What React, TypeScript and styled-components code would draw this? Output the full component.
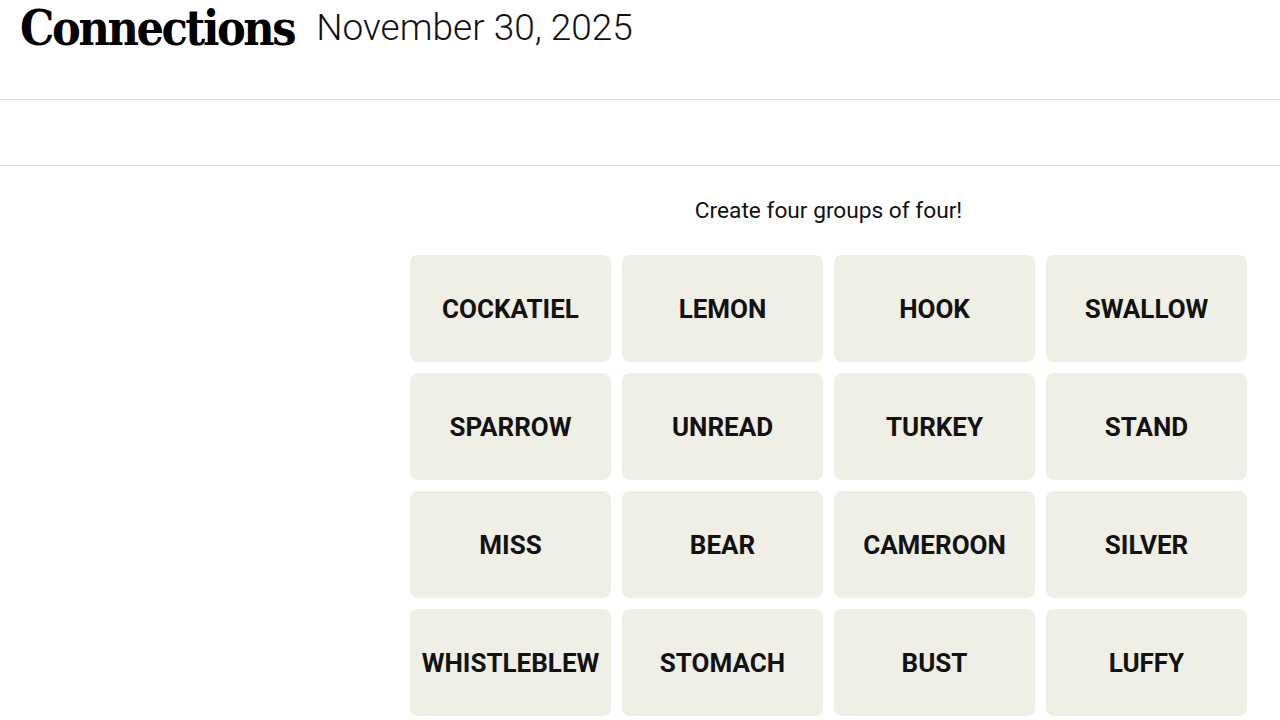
import React from 'react'
import styled, {createGlobalStyle} from 'styled-components'

const words = [
  'COCKATIEL', 'LEMON', 'HOOK', 'SWALLOW',
  'SPARROW', 'UNREAD', 'TURKEY', 'STAND',
  'MISS', 'BEAR', 'CAMEROON', 'SILVER',
  'WHISTLEBLEW', 'STOMACH', 'BUST', 'LUFFY',
]

const GlobalStyle = createGlobalStyle`
  html, body {
    margin: 0;
    padding: 0;
    background: #fff;
    overflow: hidden;
  }
  body {
    font-family: Roboto, 'Liberation Sans', sans-serif;
    color: #121212;
  }
`

function App() {
  return (
    <Page>
      <GlobalStyle />
      <Header>
        <Title>Connections</Title>
        <DateText>November 30, 2025</DateText>
      </Header>
      <Toolbar />
      <Game>
        <Prompt>Create four groups of four!</Prompt>
        <Grid>
          {words.map((w) => (
            <Tile key={w}>{w}</Tile>
          ))}
        </Grid>
      </Game>
    </Page>
  )
}

export default App

const Page = styled.div`
  width: 1280px;
  height: 720px;
`

const Header = styled.header`
  height: 100px;
  display: flex;
  align-items: flex-start;
  gap: 22px;
  padding: 0 0 0 20px;
  box-sizing: border-box;
  border-bottom: 1px solid #dcdcdc;
`

const Title = styled.h1`
  margin: 0;
  font-family: 'DejaVu Serif Condensed', 'DejaVu Serif', serif;
  font-stretch: condensed;
  font-weight: 700;
  font-size: 48px;
  letter-spacing: -2.4px;
  line-height: 56px;
  color: #000;
`

const DateText = styled.span`
  margin-top: 6px;
  font-family: Roboto, 'Liberation Sans', sans-serif;
  font-weight: 300;
  font-size: 37px;
  line-height: 44px;
  color: #121212;
`

const Toolbar = styled.div`
  height: 65px;
  border-bottom: 1px solid #dcdcdc;
`

const Game = styled.main`
  width: 837px;
  margin: 0 0 0 410px;
  display: flex;
  flex-direction: column;
  align-items: center;
`

const Prompt = styled.p`
  margin: 33px 0 0 0;
  font-family: Roboto, 'Liberation Sans', sans-serif;
  font-size: 22.7px;
  line-height: 24px;
  color: #121212;
`

const Grid = styled.div`
  margin-top: 32px;
  display: grid;
  grid-template-columns: repeat(4, 201px);
  grid-auto-rows: 107px;
  gap: 11px;
`

const Tile = styled.div`
  background: #efefe6;
  border-radius: 8px;
  display: flex;
  align-items: center;
  justify-content: center;
  font-family: Roboto, 'Liberation Sans', sans-serif;
  font-weight: 700;
  font-size: 26px;
  color: #121212;
  text-transform: uppercase;
`
